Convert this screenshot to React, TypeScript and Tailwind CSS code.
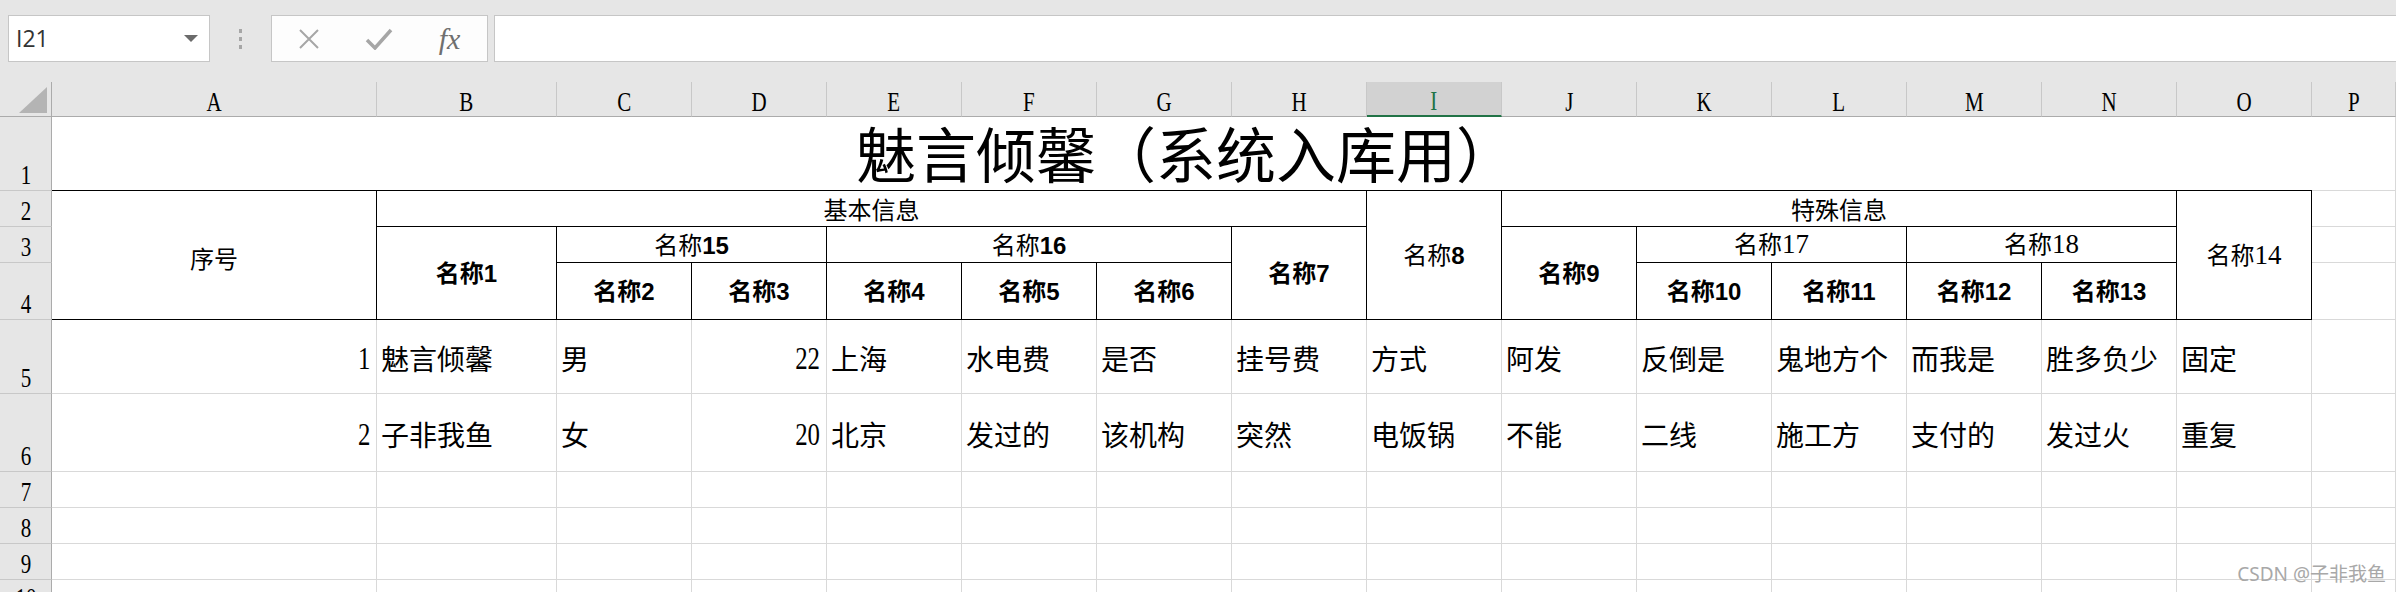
import React from 'react';

const LETTERS = ['A', 'B', 'C', 'D', 'E', 'F', 'G', 'H', 'I', 'J', 'K', 'L', 'M', 'N', 'O', 'P'];

const colHead =
  "bg-[#e6e6e6] border-r border-b border-r-[#c8c8c8] border-b-[#ababab] flex items-center justify-center pt-[5px]";
const colHeadSel =
  "bg-[#d2d2d2] border-r border-b-2 border-r-[#c8c8c8] border-b-[#217346] flex items-center justify-center pt-[5px] text-[#217346]";
const rowHead =
  "bg-[#e6e6e6] border-r border-b border-r-[#ababab] border-b-[#c8c8c8] flex items-end justify-center pb-[1px]";
const serifNarrow = "inline-block scale-x-75 text-[28px] leading-none font-['Liberation_Serif',serif]";
const T =
  "border-r border-b border-black flex items-center justify-center text-[24px] leading-none text-black font-['Noto_Sans_CJK_SC',sans-serif] whitespace-nowrap";
const grid = "border-r border-b border-[#d9d9d9]";
const dataCell =
  "border-r border-b border-[#d9d9d9] flex items-center pl-[4px] pt-[3px] text-[28px] leading-none text-black font-['Noto_Sans_CJK_SC',sans-serif] whitespace-nowrap overflow-hidden";
const numCell =
  "border-r border-b border-[#d9d9d9] flex items-center justify-end pr-[6px] pt-[3px] leading-none text-black overflow-hidden";

function RH({ n, top }: { n: string; top?: boolean }) {
  return (
    <div className={top ? "bg-[#e6e6e6] border-r border-r-[#ababab] flex items-start justify-center pt-[4px] overflow-hidden" : rowHead}>
      <span className={serifNarrow}>{n}</span>
    </div>
  );
}

function Bold({ t, d }: { t: string; d: string }) {
  return (
    <span className="font-bold">
      <span className="font-['Noto_Sans_CJK_SC',sans-serif]">{t}</span>
      <span className="font-['Liberation_Sans',sans-serif]">{d}</span>
    </span>
  );
}

function MixBold({ t, d }: { t: string; d: string }) {
  return (
    <span>
      <span className="font-['Noto_Sans_CJK_SC',sans-serif]">{t}</span>
      <span className="font-bold font-['Liberation_Sans',sans-serif]">{d}</span>
    </span>
  );
}

function MixSerif({ t, d }: { t: string; d: string }) {
  return (
    <span>
      <span className="font-['Noto_Sans_CJK_SC',sans-serif]">{t}</span>
      <span className="font-['Liberation_Serif',serif] text-[27px]">{d}</span>
    </span>
  );
}

function Num({ v }: { v: string }) {
  return (
    <div className={numCell}>
      <span className="inline-block origin-right scale-x-[0.8] text-[31px] font-['Liberation_Serif',serif]">{v}</span>
    </div>
  );
}

function Toolbar() {
  return (
    <div className="h-[82px] bg-[#e6e6e6] flex items-start pt-[15px]">
      <div className="ml-[8px] w-[202px] h-[47px] bg-white border border-[#c6c6c6] flex items-center pl-[7px] pr-[11px]">
        <span className="flex-1 text-[23px] text-[#333333] font-['Open_Sans',sans-serif] leading-none">I21</span>
        <svg width="14" height="7" viewBox="0 0 14 7">
          <path d="M0 0H14L7 7Z" fill="#6b6b6b" />
        </svg>
      </div>
      <div className="w-[61px] h-[47px] flex flex-col items-center justify-center gap-[4px]">
        <div className="w-[3px] h-[4px] bg-[#a6a6a6]" />
        <div className="w-[3px] h-[4px] bg-[#a6a6a6]" />
        <div className="w-[3px] h-[4px] bg-[#a6a6a6]" />
      </div>
      <div className="w-[217px] h-[47px] bg-[#fdfdfd] border border-[#c6c6c6] flex items-center">
        <div className="w-[74px] flex justify-center">
          <svg width="22" height="20" viewBox="0 0 22 20">
            <path d="M2 1L20 19M20 1L2 19" stroke="#a6a6a6" strokeWidth="2" fill="none" />
          </svg>
        </div>
        <div className="w-[66px] flex justify-center">
          <svg width="28" height="22" viewBox="0 0 28 22">
            <path d="M2 12L10 20L26 2" stroke="#a6a6a6" strokeWidth="3.5" fill="none" />
          </svg>
        </div>
        <div className="w-[75px] flex justify-center">
          <span className="italic text-[30px] text-[#6f6f6f] font-['Liberation_Serif',serif] leading-none">fx</span>
        </div>
      </div>
      <div className="ml-[6px] flex-1 h-[47px] bg-white border border-[#c6c6c6] border-r-0" />
    </div>
  );
}

const row5 = ['魅言倾馨', '男', '22', '上海', '水电费', '是否', '挂号费', '方式', '阿发', '反倒是', '鬼地方个', '而我是', '胜多负少', '固定'];
const row6 = ['子非我鱼', '女', '20', '北京', '发过的', '该机构', '突然', '电饭锅', '不能', '二线', '施工方', '支付的', '发过火', '重复'];

function DataRow({ n, idx, vals }: { n: string; idx: string; vals: string[] }) {
  return (
    <>
      <RH n={n} />
      <Num v={idx} />
      {vals.map((v, i) => (i === 2 ? <Num key={i} v={v} /> : <div key={i} className={dataCell}>{v}</div>))}
      <div className={grid} />
    </>
  );
}

function EmptyRow({ n, last }: { n: string; last?: boolean }) {
  return (
    <>
      <RH n={n} top={last} />
      {LETTERS.map((l) => (
        <div key={l} className={last ? "border-r border-[#d9d9d9]" : grid} />
      ))}
    </>
  );
}

function Sheet() {
  return (
    <div className="grid grid-cols-[52px_325px_180px_135px_135px_135px_135px_135px_135px_135px_135px_135px_135px_135px_135px_135px_84px] grid-rows-[35px_74px_36px_36px_57px_74px_78px_36px_36px_36px_12px]">
      {/* column headers */}
      <div className="bg-[#e6e6e6] border-r border-b border-[#ababab] flex items-end justify-end pr-[4px] pb-[3px]">
        <svg width="28" height="26" viewBox="0 0 28 26">
          <path d="M28 0L28 26L0 26Z" fill="#b4b4b4" />
        </svg>
      </div>
      {LETTERS.map((l) => (
        <div key={l} className={l === 'I' ? colHeadSel : colHead}>
          <span className={serifNarrow}>{l}</span>
        </div>
      ))}

      {/* row 1 */}
      <RH n="1" />
      <div className="col-span-15 border-b border-black flex items-end justify-center pl-[8px] pb-[8px]">
        <div className="h-[60px] text-[60px] leading-[60px] text-black font-['Noto_Sans_CJK_SC',sans-serif] whitespace-nowrap">
          魅言倾馨（系统入库用）
        </div>
      </div>
      <div className={grid} />

      {/* row 2 */}
      <RH n="2" />
      <div className={`row-span-3 pt-[5px] ${T}`}>序号</div>
      <div className={`col-span-7 ${T}`}>基本信息</div>
      <div className={`row-span-3 ${T}`}>
        <MixBold t="名称" d="8" />
      </div>
      <div className={`col-span-5 ${T}`}>特殊信息</div>
      <div className={`row-span-3 ${T}`}>
        <MixSerif t="名称" d="14" />
      </div>
      <div className={grid} />

      {/* row 3 */}
      <RH n="3" />
      <div className={`row-span-2 ${T}`}>
        <Bold t="名称" d="1" />
      </div>
      <div className={`col-span-2 ${T}`}>
        <MixBold t="名称" d="15" />
      </div>
      <div className={`col-span-3 ${T}`}>
        <MixBold t="名称" d="16" />
      </div>
      <div className={`row-span-2 ${T}`}>
        <Bold t="名称" d="7" />
      </div>
      <div className={`row-span-2 ${T}`}>
        <Bold t="名称" d="9" />
      </div>
      <div className={`col-span-2 ${T}`}>
        <MixSerif t="名称" d="17" />
      </div>
      <div className={`col-span-2 ${T}`}>
        <MixSerif t="名称" d="18" />
      </div>
      <div className={grid} />

      {/* row 4 */}
      <RH n="4" />
      <div className={T}><Bold t="名称" d="2" /></div>
      <div className={T}><Bold t="名称" d="3" /></div>
      <div className={T}><Bold t="名称" d="4" /></div>
      <div className={T}><Bold t="名称" d="5" /></div>
      <div className={T}><Bold t="名称" d="6" /></div>
      <div className={T}><Bold t="名称" d="10" /></div>
      <div className={T}><Bold t="名称" d="11" /></div>
      <div className={T}><Bold t="名称" d="12" /></div>
      <div className={T}><Bold t="名称" d="13" /></div>
      <div className={grid} />

      {/* data */}
      <DataRow n="5" idx="1" vals={row5} />
      <DataRow n="6" idx="2" vals={row6} />
      <EmptyRow n="7" />
      <EmptyRow n="8" />
      <EmptyRow n="9" />
      <EmptyRow n="10" last />
    </div>
  );
}

export default function App() {
  return (
    <div className="w-[2396px] h-[592px] overflow-hidden relative bg-white">
      <Toolbar />
      <Sheet />
      <div className="absolute right-[10px] bottom-[8px] text-[19px] text-[#a8a8a8] font-['Noto_Sans','Noto_Sans_CJK_SC',sans-serif] leading-none whitespace-nowrap">
        CSDN @子非我鱼
      </div>
    </div>
  );
}
